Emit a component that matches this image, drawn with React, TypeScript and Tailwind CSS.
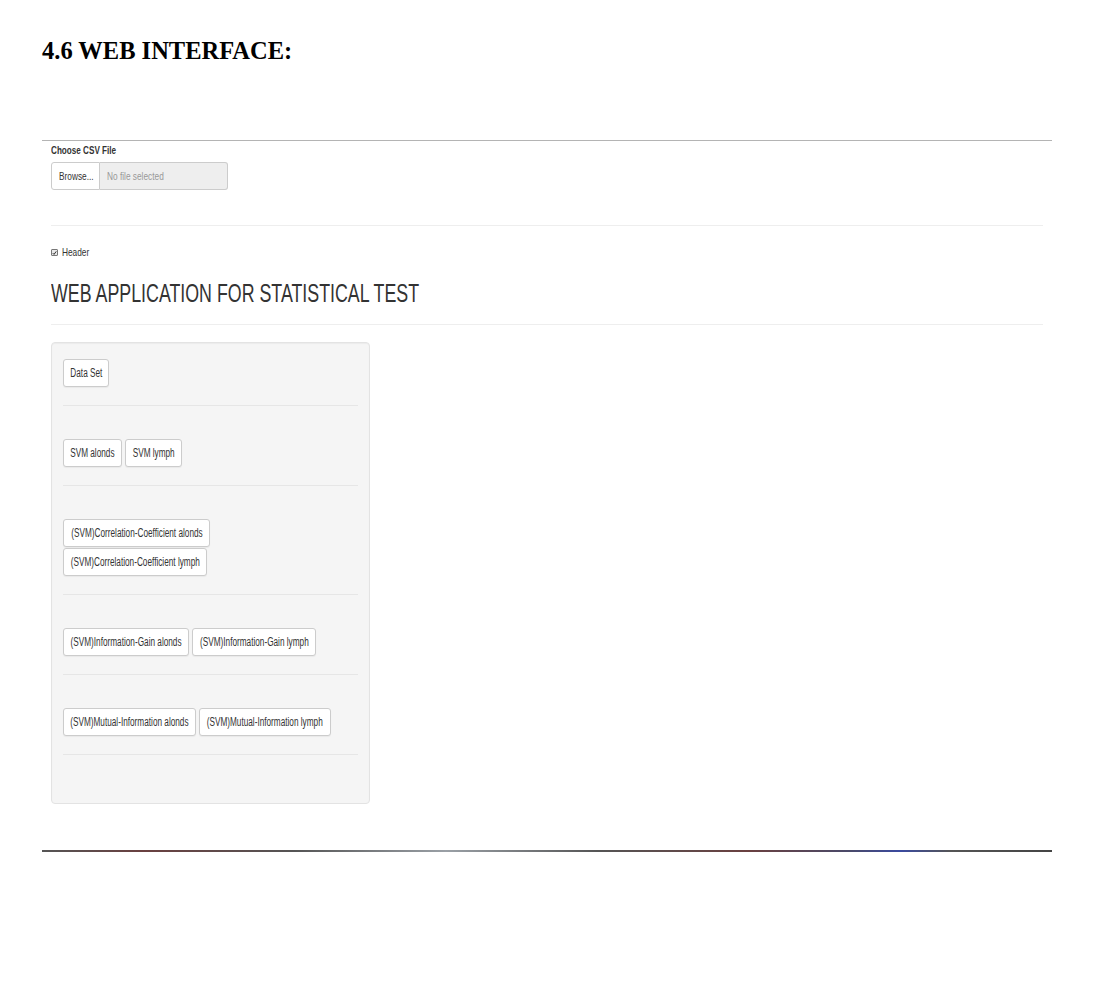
const sans = "font-['Liberation_Sans',Arial,sans-serif]";

// the source shot is squeezed sideways, so text is narrowed with scale-x
function Squeeze({ children, center }: { children: React.ReactNode; center?: boolean }) {
  return (
    <span
      className={`inline-block whitespace-nowrap scale-x-[0.755] ${center ? "origin-center" : "origin-left"}`}
    >
      {children}
    </span>
  );
}

function Btn({ label, w }: { label: string; w: string }) {
  return (
    <button
      className={`${sans} ${w} flex h-[28px] shrink-0 items-center justify-center rounded-[3px] border border-[#cccccc] bg-white text-[12px] leading-none text-[#333333] shadow-[0_1px_1px_rgba(0,0,0,0.05)]`}
    >
      <span className="inline-block origin-center scale-x-[0.685] whitespace-nowrap">{label}</span>
    </button>
  );
}

function Group({ children, first }: { children: React.ReactNode; first?: boolean }) {
  return (
    <div className={first ? "" : "pt-[33px]"}>
      {children}
      <div className="mt-[18px] h-px bg-[#e6e6e6]" />
    </div>
  );
}

export default function App() {
  return (
    <div className="min-h-[1002px] w-[1094px] bg-white">
      <div className="px-[42px] pt-[36px]">
        <h1 className="font-['Liberation_Serif','Times_New_Roman',serif] text-[24.5px] font-bold leading-[30px] text-black">
          4.6 WEB INTERFACE:
        </h1>
      </div>

      <div className="mx-[42px] mt-[74px] w-[1010px] border-t border-[#b4b4b4]">
        <div className={`${sans} px-[9px] text-[#333333]`}>
          <p className="mt-[3px] text-[11px] font-bold leading-[13px]">
            <span className="inline-block origin-left scale-x-[0.74] whitespace-nowrap">Choose CSV File</span>
          </p>
          <div className="mt-[5px] flex h-[28px]">
            <span className="flex w-[49px] items-center rounded-l-[3px] border border-[#cccccc] bg-white pl-[7px] text-[11px]">
              <Squeeze>Browse...</Squeeze>
            </span>
            <span className="flex w-[128px] items-center rounded-r-[3px] border border-l-0 border-[#cccccc] bg-[#eeeeee] pl-[7px] text-[11px] text-[#999999]">
              <Squeeze>No file selected</Squeeze>
            </span>
          </div>

          <div className="mt-[35px] h-px bg-[#eeeeee]" />

          <label className="mt-[20px] flex items-center gap-[4px] text-[11px] leading-[13px]">
            <span className="flex h-[7px] w-[7px] items-center justify-center rounded-[1px] border border-[#777777] bg-[#e8e8e8]">
              <svg viewBox="0 0 8 8" className="h-[6px] w-[6px]">
                <path d="M1.2 4.2 L3.2 6.2 L6.8 1.4" fill="none" stroke="#222" strokeWidth="1.5" />
              </svg>
            </span>
            <Squeeze>Header</Squeeze>
          </label>

          <h2 className="mt-[19px] text-[26px] font-normal leading-[30px] text-[#333333]">
            <span className="inline-block origin-left scale-x-[0.685] whitespace-nowrap">
              WEB APPLICATION FOR STATISTICAL TEST
            </span>
          </h2>

          <div className="mt-[16px] h-px bg-[#eeeeee]" />

          <div className="mt-[17px] h-[462px] w-[319px] rounded-[4px] border border-[#e3e3e3] bg-[#f5f5f5] px-[11px] pt-[16px] shadow-[inset_0_1px_1px_rgba(0,0,0,0.04)]">
            <Group first>
              <Btn label="Data Set" w="w-[46px]" />
            </Group>
            <Group>
              <div className="flex gap-[3px]">
                <Btn label="SVM alonds" w="w-[59px]" />
                <Btn label="SVM lymph" w="w-[57px]" />
              </div>
            </Group>
            <Group>
              <div className="flex flex-col gap-px">
                <Btn label="(SVM)Correlation-Coefficient alonds" w="w-[147px]" />
                <Btn label="(SVM)Correlation-Coefficient lymph" w="w-[144px]" />
              </div>
            </Group>
            <Group>
              <div className="flex gap-[3px]">
                <Btn label="(SVM)Information-Gain alonds" w="w-[126px]" />
                <Btn label="(SVM)Information-Gain lymph" w="w-[124px]" />
              </div>
            </Group>
            <Group>
              <div className="flex gap-[3px]">
                <Btn label="(SVM)Mutual-Information alonds" w="w-[133px]" />
                <Btn label="(SVM)Mutual-Information lymph" w="w-[132px]" />
              </div>
            </Group>
          </div>
        </div>

        <div className="mt-[46px] h-[2px] bg-[linear-gradient(90deg,#555_0%,#6a4040_10%,#555_25%,#9aa0a6_40%,#555_55%,#6a4040_70%,#4a4a6a_80%,#3a4aa0_85%,#555_90%,#444_100%)]" />
      </div>
    </div>
  );
}
